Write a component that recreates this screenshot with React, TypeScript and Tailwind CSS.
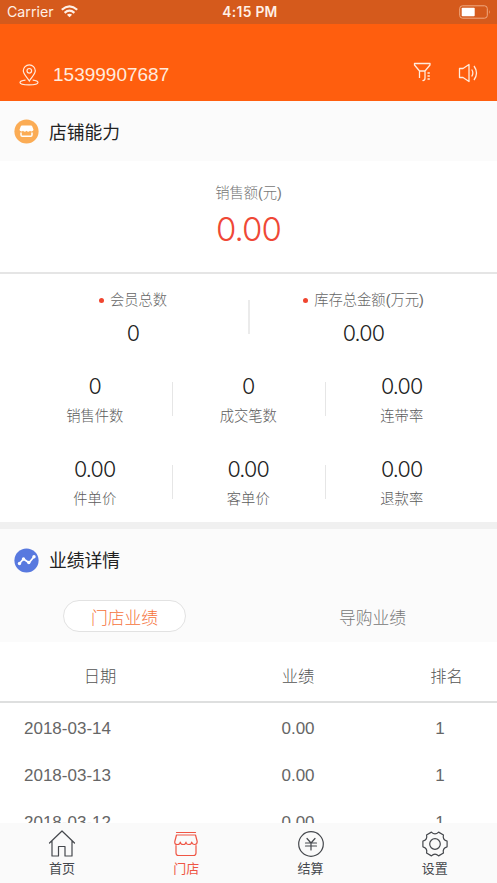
import type { ReactNode } from 'react';

const numFont = "font-['Inter',sans-serif] font-light";

function Stat({ value, label }: { value: string; label: string }) {
  return (
    <div className="flex w-[153.5px] flex-col items-center">
      <div className={`${numFont} h-[30px] text-[21.5px] leading-[30px] tracking-[-0.8px] text-[#222]`}>{value}</div>
      <div className="h-[30px] text-[14.3px] font-light leading-[31px] text-[#5c5c5c]">{label}</div>
    </div>
  );
}

function StatRow({ items }: { items: [string, string][] }) {
  return (
    <div className="flex h-[82.5px] pl-[18px]">
      {items.map(([value, label], i) => (
        <div key={label} className="flex">
          {i > 0 && <div className="mt-[11px] -mr-px h-[34px] w-px bg-[#e6e6e6]" />}
          <Stat value={value} label={label} />
        </div>
      ))}
    </div>
  );
}

function TopStat({ label, value, className }: { label: string; value: string; className: string }) {
  return (
    <div className={`flex flex-col items-center ${className}`}>
      <div className="flex h-[28px] items-center gap-[6px] text-[14.3px] font-light leading-[28px] text-[#666]">
        <span className="mt-[2px] size-[5px] rounded-full bg-[#f0452f]" />
        <span className="pt-[2px]">{label}</span>
      </div>
      <div className={`${numFont} mt-[5px] h-[30px] text-[21.5px] leading-[30px] tracking-[-0.8px] text-[#222]`}>{value}</div>
    </div>
  );
}

function Tab({ label, active, children }: { label: string; active?: boolean; children: ReactNode }) {
  return (
    <div className={`flex flex-1 flex-col items-center pt-[7px] ${active ? 'text-[#ef5544]' : 'text-[#45484d]'}`}>
      <svg width="28" height="28" viewBox="0 0 28 28" fill="none" stroke="currentColor" strokeWidth="1.2" strokeLinejoin="round" strokeLinecap="round">
        {children}
      </svg>
      <span className="text-[13px] leading-[22px]">{label}</span>
    </div>
  );
}

const rows = ['2018-03-14', '2018-03-13', '2018-03-12'];

export default function App() {
  return (
    <div className="flex h-[883px] w-[497px] flex-col overflow-hidden bg-white font-['Liberation_Sans','Noto_Sans_CJK_SC',sans-serif]">
      <div className="grid h-[24px] shrink-0 grid-cols-3 items-center bg-[#d55a1c] text-[#fff0e6]">
        <div className="flex items-center gap-[7px] pl-[7px] font-['Inter',sans-serif] text-[14.2px]">
          <span>Carrier</span>
          <svg width="17" height="13" viewBox="0 0 17 13" fill="none" stroke="currentColor" strokeWidth="2.2">
            <path d="M.8 4.8Q8.5-2 16.2 4.8M3.6 7.8Q8.5 3.6 13.4 7.8" />
            <path d="M8.5 12.2 5.9 9.7Q8.500 7.600 11.100 9.700Z" fill="currentColor" stroke="none" />
          </svg>
        </div>
        <div className="pl-[3px] text-center font-['Inter',sans-serif] text-[13.800px] font-semibold tracking-[0.3px]">4:15 PM</div>
        <div className="flex justify-end pr-[6px]">
          <svg width="32" height="14" viewBox="0 0 32 14" fill="none">
            <rect x=".7" y=".8" width="27.6" height="12.4" rx="2.8" stroke="#f0a981" />
            <rect x="2.7" y="2.8" width="13" height="8.4" rx=".8" fill="#fff" />
            <path d="M30 5q1.500 2 0 4Z" fill="#f0a981" />
          </svg>
        </div>
      </div>

      <div className="flex h-[77px] shrink-0 items-center bg-[#ff5e0e] pt-[24px] pl-[19px] text-[#ffebdd]">
        <svg width="20" height="22" viewBox="0 0 20 22" fill="none" stroke="currentColor" strokeWidth="1.2">
          <path d="M10.300 17C8 13.200 4.300 10.200 4.300 6.800a6 6 0 0 1 12 0c0 3.400-3.700 6.400-6 10.200Z" />
          <circle cx="10.300" cy="6.800" r="2.300" />
          <path d="M6.500 16.200C3 16.600 1 17.400 1 18.500c0 1.400 4 2.400 9 2.400s9-1 9-2.400c0-1.100-2-1.900-5.300-2.300" />
        </svg>
        <span className="ml-[14px] flex-1 text-[19px] leading-[24px]">15399907687</span>
        <svg className="mb-[5px] mr-[26px]" width="19" height="20" viewBox="0 0 19 20" fill="none" stroke="currentColor" strokeWidth="1.300" strokeLinejoin="round">
          <path d="M1.500 1.500h15.500v1.500l-5 6H6.500l-5-6ZM6.500 9v7M12 9v7q0 2.500-2 2.500V18M14.500 11h2.300M14.500 14h2.300M14.500 17h2.300" />
        </svg>
        <svg className="mb-[4px] mr-[19px]" width="20" height="20" viewBox="0 0 20 20" fill="none" stroke="currentColor" strokeWidth="1.300" strokeLinejoin="round">
          <path d="M1.500 5.500h3.500L11 1.500v17l-6-4H1.500ZM13.700 6.500q2.300 3.500 0 7M16 3q5 7 0 14" />
        </svg>
      </div>

      <div className="flex h-[60px] shrink-0 items-center gap-[10px] bg-[#fbfbfb] pt-px pl-[14px]">
        <svg width="25" height="25" viewBox="0 0 25 25">
          <circle cx="12.500" cy="12.500" r="12.100" fill="#fbac55" />
          <path d="M8 6.500h9q1 0 1.300 1l1.200 3.200a2 2 0 0 1-3.500 1 2.300 2.300 0 0 1-3.500 0 2.300 2.300 0 0 1-3.500 0 2 2 0 0 1-3.500-1L6.700 7.500q.3-1 1.300-1Z" fill="#fff" />
          <path d="M7 13.500V16q0 1.300 1.300 1.300h8.400Q18 17.300 18 16v-2.500" fill="none" stroke="#fff" strokeWidth="1.500" />
        </svg>
        <span className="pt-[2px] text-[17.800px] leading-[26px] text-[#222]">店铺能力</span>
      </div>

      <div className="flex h-[111px] shrink-0 flex-col items-center pt-[20px]">
        <div className="text-[14.300px] font-light leading-[24px] text-[#777]">销售额(元)</div>
        <div className={`${numFont} mt-[3px] text-[33px] leading-[42px] tracking-[-0.9px] text-[#ef4836]`}>0.00</div>
      </div>
      <div className="h-[2px] shrink-0 bg-[#e5e5e5]" />

      <div className="flex h-[97px] shrink-0 pt-[11px]">
        <TopStat label="会员总数" value="0" className="w-[248px] pl-[18px]" />
        <div className="mt-[15px] h-[34px] w-[1.500px] bg-[#ebebeb]" />
        <TopStat label="库存总金额(万元)" value="0.00" className="w-[228px]" />
      </div>
      <StatRow items={[['0', '销售件数'], ['0', '成交笔数'], ['0.00', '连带率']]} />
      <StatRow items={[['0.00', '件单价'], ['0.00', '客单价'], ['0.00', '退款率']]} />

      <div className="-mt-[14px] h-[7px] shrink-0 bg-[#f0f0f0]" />
      <div className="h-[113px] shrink-0 bg-[#fbfbfb]">
        <div className="flex h-[62px] items-center gap-[10px] pl-[14px]">
          <svg width="25" height="25" viewBox="0 0 25 25">
            <circle cx="12.500" cy="12.500" r="12.100" fill="#5879df" />
            <path d="m5.500 15.500 4-4.500 5.500 3.800 5-6" fill="none" stroke="#fff" strokeWidth="1.700" />
            <g fill="#fff"><circle cx="5.500" cy="15.500" r="1.700" /><circle cx="9.500" cy="11" r="1.700" /><circle cx="14.800" cy="14.500" r="1.700" /><circle cx="20" cy="8.700" r="1.700" /></g>
          </svg>
          <span className="pt-[2px] text-[17.800px] leading-[26px] text-[#222]">业绩详情</span>
        </div>
        <div className="mt-[9px] flex h-[32px] text-[16.800px] font-light leading-[35px]">
          <div className="ml-[63px] w-[123px] rounded-full border border-[#e2e2e2] bg-white text-center text-[#f5723b]">门店业绩</div>
          <div className="ml-[125px] w-[123px] pt-px text-center text-[#777]">导购业绩</div>
        </div>
      </div>

      <div className="flex h-[59px] shrink-0 pt-[17px] text-[16.300px] font-light leading-[35px] text-[#555]">
        <div className="w-[200px] text-center">日期</div>
        <div className="w-[196px] text-center">业绩</div>
        <div className="w-[101px] text-center">排名</div>
      </div>
      <div className="h-[2px] shrink-0 bg-[#dedfdf]" />

      <div className="h-[120px] shrink-0 overflow-hidden pt-[2px] text-[17px] leading-[47px] text-[#666]">
        {rows.map((date) => (
          <div key={date} className="flex h-[47px]">
            <div className="w-[200px] pl-[24px]">{date}</div>
            <div className="w-[196px] text-center">0.00</div>
            <div className="w-[88px] text-center">1</div>
          </div>
        ))}
      </div>

      <div className="flex h-[60px] shrink-0 bg-[#fafafa]">
        <Tab label="首页">
          <path d="M1.500 13 14 1l12.500 12M4 11v15h6.500V16.500h6.500V26H24V11" />
        </Tab>
        <Tab label="门店" active>
          <path d="M4.500 2.500h19M4.500 5h19l1.700 6.500q0 3-2.500 3t-3-2.500q0 2.500-2.900 2.500T14 12q0 2.500-2.800 2.500T8.300 12q0 2.500-3 2.500t-2.500-3ZM4 15.500v7.500q0 2.500 2.500 2.500h15q2.500 0 2.500-2.500v-7.500" />
        </Tab>
        <Tab label="结算">
          <circle cx="14" cy="14" r="12.300" />
          <path d="m10 8.500 4 4.500 4-4.500M8.500 13h11M8.500 16h11M14 13v7" />
        </Tab>
        <Tab label="设置">
          <circle cx="14" cy="14" r="5.300" />
          <path d="M26.100 11.200V16.800Q21.200 18.150 22.460 23.070L17.600 25.860Q14 22.300 10.400 25.860L5.540 23.070Q6.800 18.150 1.900 16.800V11.200Q6.800 9.850 5.540 4.930L10.400 2.140Q14 5.700 17.600 2.140L22.460 4.930Q21.200 9.850 26.100 11.200Z" />
        </Tab>
      </div>
    </div>
  );
}
